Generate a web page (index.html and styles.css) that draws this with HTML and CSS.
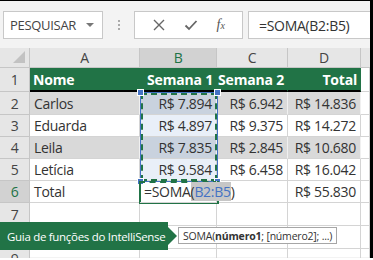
FILE: index.html
```html
<!DOCTYPE html>
<html lang="pt-BR">
<head>
<meta charset="UTF-8" />
<title>SOMA - IntelliSense</title>
<link rel="stylesheet" href="styles.css">
</head>
<body>
  <div class="frame">
    <div class="bar">
      <div class="namebox">
        <span>PESQUISAR</span>
        <span class="caret"></span>
      </div>
      <div class="grip"><i></i><i></i><i></i></div>
      <div class="btns">
        <svg class="ico" width="14" height="14" viewBox="0 0 14 14"><path d="M2 2L12 12M12 2L2 12" stroke="#666" stroke-width="1.4" fill="none"/></svg>
        <svg class="ico" width="14" height="14" viewBox="0 0 14 14"><path d="M1.5 7.5L5 11L12.5 3" stroke="#666" stroke-width="1.8" fill="none"/></svg>
        <span class="fx">f<small>x</small></span>
      </div>
      <div class="formula">=SOMA(B2:B5)</div>
    </div>

    <div class="sheet">
      <div class="corner"><span class="tri"></span></div>
      <div class="colh">A</div>
      <div class="colh on">B</div>
      <div class="colh">C</div>
      <div class="colh">D</div>
      <div class="colh end"></div>

      <div class="rowh">1</div>
      <div class="c th">Nome</div>
      <div class="c th r">Semana 1</div>
      <div class="c th r">Semana 2</div>
      <div class="c th r">Total</div>
      <div class="c"></div>

      <div class="rowh">2</div>
      <div class="c band">Carlos</div>
      <div class="c band r sel">R$ 7.894</div>
      <div class="c band r">R$ 6.942</div>
      <div class="c band r">R$ 14.836</div>
      <div class="c"></div>

      <div class="rowh">3</div>
      <div class="c">Eduarda</div>
      <div class="c r sel">R$ 4.897</div>
      <div class="c r">R$ 9.375</div>
      <div class="c r">R$ 14.272</div>
      <div class="c"></div>

      <div class="rowh">4</div>
      <div class="c band">Leila</div>
      <div class="c band r sel">R$ 7.835</div>
      <div class="c band r">R$ 2.845</div>
      <div class="c band r">R$ 10.680</div>
      <div class="c"></div>

      <div class="rowh">5</div>
      <div class="c">Letícia</div>
      <div class="c r sel">R$ 9.584</div>
      <div class="c r">R$ 6.458</div>
      <div class="c r">R$ 16.042</div>
      <div class="c"></div>

      <div class="rowh on">6</div>
      <div class="c">Total</div>
      <div class="c edit">=SOMA<span class="hl">(<b>B2:B5</b></span>)<span class="cursor"></span></div>
      <div class="c"></div>
      <div class="c r">R$ 55.830</div>
      <div class="c"></div>

      <div class="rowh">7</div>
      <div class="c"></div><div class="c"></div><div class="c"></div><div class="c"></div><div class="c"></div>

      <div class="rowh">8</div>
      <div class="c"></div><div class="c"></div><div class="c"></div><div class="c"></div><div class="c"></div>

      <div class="rowh">9</div>
      <div class="c"></div><div class="c"></div><div class="c"></div><div class="c"></div><div class="c"></div>

      <!-- intervalo referenciado B2:B5 -->
      <div class="range">
        <span class="dot tl"></span><span class="dot tr"></span>
        <span class="dot bl"></span><span class="dot br"></span>
      </div>
      <div class="active"></div>

      <div class="guide">Guia de funções do IntelliSense</div>
      <div class="hint">SOMA(<b>número1</b>; [número2]; ...)</div>
    </div>
  </div>
</body>
</html>
```
FILE: styles.css
```css
body {
  margin: 0;
  font-family: "Open Sans", "Noto Sans", sans-serif;
  color: #333;
  background: #fff;
}
.frame {
  width: 370px;
  height: 257px;
  border-top: 1px solid #000;
  border-right: 3px solid #000;
  overflow: hidden;
  background: #f3f3f3;
}
.bar {
  display: flex;
  align-items: center;
  height: 28px;
  padding: 10px 0 0 3px;
  margin-bottom: 9px;
}
.namebox {
  width: 100px;
  height: 28px;
  box-sizing: border-box;
  border: 1px solid #c8c8c8;
  background: #fff;
  display: flex;
  align-items: center;
  justify-content: space-between;
  padding: 0 8px 0 6px;
  font-size: 13px;
  letter-spacing: -0.3px;
  color: #444;
}
.caret {
  width: 0;
  height: 0;
  border-left: 4px solid transparent;
  border-right: 4px solid transparent;
  border-top: 4px solid #777;
}
.grip {
  width: 31px;
  display: flex;
  flex-direction: column;
  align-items: center;
  gap: 2px;
}
.grip i {
  width: 2px;
  height: 2px;
  background: #aaa;
}
.btns {
  width: 109px;
  height: 28px;
  box-sizing: border-box;
  border: 1px solid #c8c8c8;
  background: #fff;
  display: flex;
  align-items: center;
  justify-content: space-around;
  padding: 0 8px;
}
.fx {
  font-family: "Liberation Serif", serif;
  font-style: italic;
  font-size: 14px;
  color: #555;
}
.fx small {
  font-size: 10px;
}
.formula {
  flex: 1;
  height: 28px;
  margin-left: 5px;
  box-sizing: border-box;
  border: 1px solid #c8c8c8;
  border-right: none;
  background: #fff;
  display: flex;
  align-items: center;
  padding-left: 10px;
  font-size: 14px;
  letter-spacing: -0.3px;
  color: #333;
}

.sheet {
  position: relative;
  display: grid;
  grid-template-columns: 30px 110px 77px 71px 73px 1fr;
  grid-template-rows: 20px 24px 23px 22px 22px 22px 22px 23px 23px 1fr;
  height: 209px;
  background: #fff;
  font-size: 14px;
  letter-spacing: -0.3px;
}
.corner, .colh, .rowh {
  background: #e6e6e6;
  border-right: 1px solid #c6c6c6;
  border-bottom: 1px solid #c6c6c6;
  box-sizing: border-box;
  color: #444;
}
.corner {
  position: relative;
}
.tri {
  position: absolute;
  right: 4px;
  bottom: 4px;
  width: 0;
  height: 0;
  border-left: 12px solid transparent;
  border-bottom: 12px solid #c2c2c2;
}
.colh {
  display: flex;
  align-items: center;
  justify-content: center;
  font-size: 14px;
}
.colh.on, .rowh.on {
  background: #d2d2d2;
  color: #217346;
}
.colh.end {
  border-right: none;
}
.rowh {
  display: flex;
  align-items: center;
  justify-content: center;
  font-size: 14px;
}
.c {
  box-sizing: border-box;
  border-right: 1px solid #d4d4d4;
  border-bottom: 1px solid #d4d4d4;
  display: flex;
  align-items: center;
  padding: 0 4px;
  white-space: nowrap;
  color: #333;
}
.c.r {
  justify-content: flex-end;
}
.c.th {
  background: #217346;
  color: #fff;
  font-weight: bold;
  font-size: 14px;
  letter-spacing: -0.2px;
  border-right-color: #217346;
  border-bottom: 2px solid #000;
  padding: 0 3px;
}
.c.band {
  background: #d9d9d9;
  border-right-color: #f0f0f0;
}
.c.sel {
  background: #e9eff8;
}
.c.band.sel {
  background: #c9d2de;
}
.c.edit {
  overflow: visible;
  position: relative;
  z-index: 2;
}
.hl {
  background: #c6c6c6;
}
.hl b {
  font-weight: normal;
  color: #4472c4;
}
.cursor {
  display: inline-block;
  width: 1px;
  height: 16px;
  background: #000;
}

.range {
  position: absolute;
  left: 140px;
  top: 44px;
  width: 78px;
  height: 90px;
  box-sizing: border-box;
  border: 1px solid #4472c4;
  outline: 2px dashed #217346;
  outline-offset: -3px;
}
.dot {
  position: absolute;
  width: 5px;
  height: 5px;
  background: #4472c4;
  border: 1px solid #fff;
}
.dot.tl { left: -4px; top: -4px; }
.dot.tr { right: -4px; top: -4px; }
.dot.bl { left: -4px; bottom: -4px; }
.dot.br { right: -4px; bottom: -4px; }
.active {
  position: absolute;
  left: 139px;
  top: 133px;
  width: 80px;
  height: 23px;
  box-sizing: border-box;
  border: 2px solid #217346;
  border-top-style: dashed;
}
.guide {
  position: absolute;
  left: 0;
  top: 174px;
  width: 168px;
  height: 28px;
  background: #217346;
  color: #fff;
  font-size: 11.5px;
  letter-spacing: -0.3px;
  white-space: nowrap;
  display: flex;
  align-items: center;
  padding-left: 7px;
  box-sizing: border-box;
  z-index: 3;
}
.guide::after {
  content: "";
  position: absolute;
  right: -9px;
  top: 5px;
  border-top: 9px solid transparent;
  border-bottom: 9px solid transparent;
  border-left: 9px solid #217346;
}
.hint {
  position: absolute;
  left: 178px;
  top: 179px;
  height: 17px;
  box-sizing: border-box;
  border: 1px solid #a6a6a6;
  background: #fff;
  font-size: 10.5px;
  letter-spacing: -0.2px;
  white-space: nowrap;
  color: #333;
  padding: 0 4px;
  display: flex;
  align-items: center;
  z-index: 3;
}
```
